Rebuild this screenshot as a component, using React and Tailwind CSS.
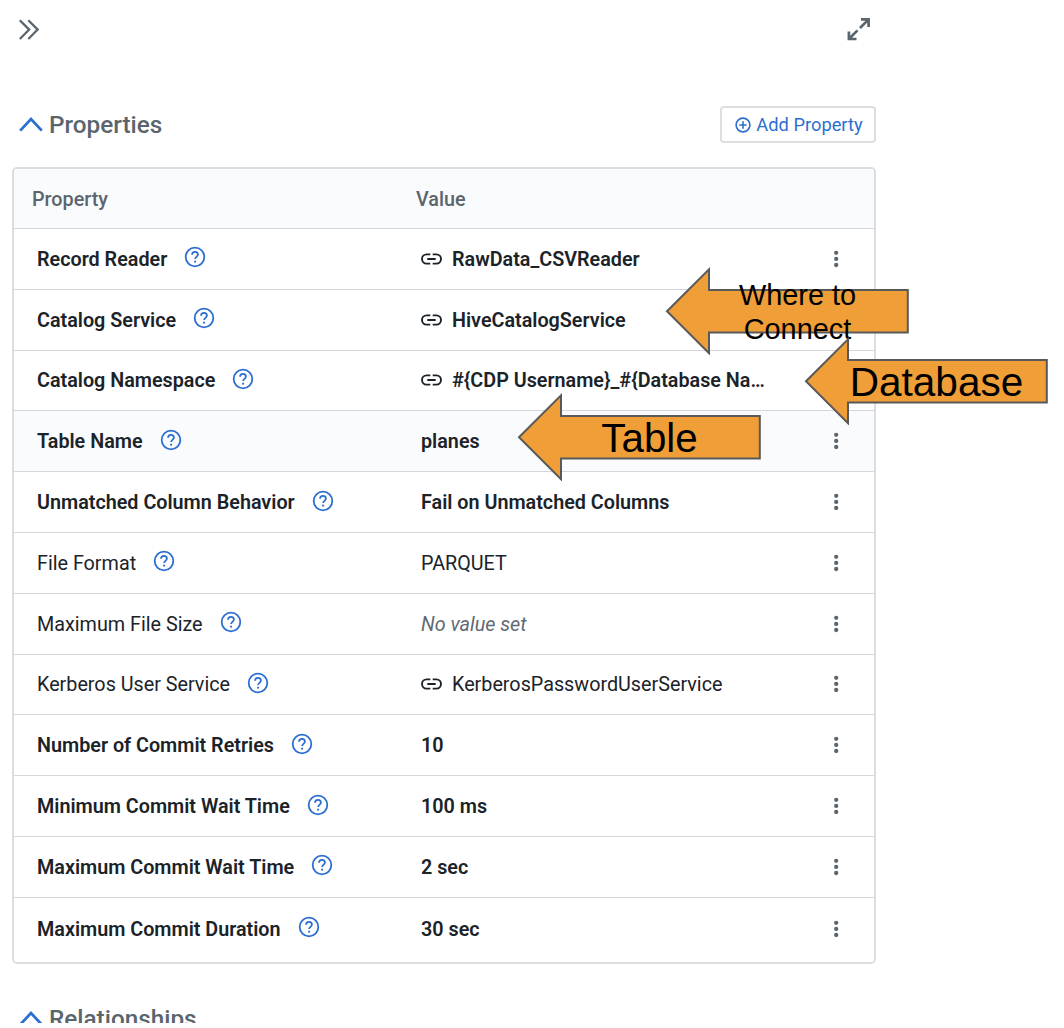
import React from "react";

const rows = [
  { name: "Record Reader", value: "RawData_CSVReader", link: true, bold: true, menu: true },
  { name: "Catalog Service", value: "HiveCatalogService", link: true, bold: true },
  { name: "Catalog Namespace", value: "#{CDP Username}_#{Database Na…", link: true, bold: true },
  { name: "Table Name", value: "planes", bold: true, menu: true, active: true },
  { name: "Unmatched Column Behavior", value: "Fail on Unmatched Columns", bold: true, menu: true },
  { name: "File Format", value: "PARQUET", menu: true },
  { name: "Maximum File Size", value: "No value set", empty: true, menu: true },
  { name: "Kerberos User Service", value: "KerberosPasswordUserService", link: true, menu: true },
  { name: "Number of Commit Retries", value: "10", bold: true, menu: true },
  { name: "Minimum Commit Wait Time", value: "100 ms", bold: true, menu: true },
  { name: "Maximum Commit Wait Time", value: "2 sec", bold: true, menu: true },
  { name: "Maximum Commit Duration", value: "30 sec", bold: true, menu: true },
];

function HelpIcon() {
  return (
    <svg className="mb-[3px] ml-[17px] h-[22px] w-[22px] shrink-0" viewBox="0 0 22 22" fill="none" stroke="#2c6fd1" strokeWidth="1.8">
      <circle cx="11" cy="11" r="9.3" />
      <path d="M8.1 8.7c0-1.7 1.2-2.8 2.9-2.8s2.9 1.1 2.9 2.7c0 2.2-2.8 2.3-2.8 4.5" />
      <path d="M11.1 14.7v1.9" strokeWidth="1.9" />
    </svg>
  );
}

function LinkIcon() {
  return (
    <svg className="mr-[10px] h-3 w-[21px] shrink-0" viewBox="0 0 21 12" fill="none" stroke="#1b2329" strokeWidth="1.9">
      <path d="M9.3 1.4H5.6a4.6 4.6 0 0 0 0 9.2h3.7M11.7 1.4h3.7a4.6 4.6 0 0 1 0 9.2h-3.7M6.3 6h8.4" />
    </svg>
  );
}

function MenuIcon() {
  return (
    <svg className="h-5 w-6 shrink-0" viewBox="0 0 24 20" fill="#5a656d">
      <circle cx="12.2" cy="3.8" r="2.15" />
      <circle cx="12.2" cy="9.9" r="2.15" />
      <circle cx="12.2" cy="16" r="2.15" />
    </svg>
  );
}

function CaretUp() {
  return (
    <svg className="h-4 w-6 shrink-0" viewBox="0 0 24 16" fill="none" stroke="#2c6fd1" strokeWidth="2.8">
      <path d="M1.2 13.6 12 2.1l10.8 11.5" />
    </svg>
  );
}

function Arrow({ className, children }) {
  return (
    <div className={`absolute h-[88px] w-[244px] ${className}`}>
      <svg className="absolute inset-0 h-full w-full" viewBox="0 0 244 88" fill="#f09e38" stroke="#595959" strokeWidth="2">
        <path d="M2 44.3 44 2.4V23H242.8v42.6H44v20.6z" />
      </svg>
      <div className="relative flex h-full items-center justify-center whitespace-nowrap text-center font-['Liberation_Sans',Arial,sans-serif] text-black">
        {children}
      </div>
    </div>
  );
}

function PropertyRow({ row }) {
  const weight = row.bold ? "font-semibold" : "font-normal";
  return (
    <div className={`flex h-[60.8px] shrink-0 items-center border-b border-[#d3d6da] last:h-[65px] last:border-b-0 last:pb-[3px] ${row.active ? "bg-[#fafbfd]" : "bg-white"}`}>
      <div className={`flex w-[407px] shrink-0 items-center pl-[23px] ${weight}`}>
        <span className="pt-[2px]">{row.name}</span>
        <HelpIcon />
      </div>
      <div className={`flex w-[345px] shrink-0 items-center ${weight} ${row.empty ? "italic text-[#5f6a72]" : ""}`}>
        {row.link && <LinkIcon />}
        <span className="whitespace-nowrap pt-[2px]">{row.value}</span>
      </div>
      <div className="ml-[58px] flex w-6">{row.menu && <MenuIcon />}</div>
    </div>
  );
}

export default function App() {
  return (
    <div className="relative h-[1028px] w-[1064px] overflow-hidden bg-white font-['Roboto',sans-serif] text-[19.75px] leading-6 text-[#1b2329]">
      <div className="h-[1023px] overflow-hidden">
        <header className="flex h-[106px] w-[876px] items-start justify-between pl-[18px] pr-[5px] pt-[17px]">
          <svg className="mt-[1px] h-[23px] w-[22px]" viewBox="0 0 22 23" fill="none" stroke="#5a656d" strokeWidth="2.3">
            <path d="M1.8 2.2 11.2 11.6l-9.4 9.4M10.3 2.2l9.4 9.4-9.4 9.4" />
          </svg>
          <svg className="h-6 w-6" viewBox="0 0 24 24" fill="none" stroke="#5a656d" strokeWidth="2.7">
            <path d="M14 2.4h7.6V10M21.6 2.4l-8.6 8.6M1.9 14.4V22h7.6M1.9 22l8.6-8.6" />
          </svg>
        </header>
        <div className="flex h-[37px] w-[876px] items-center justify-between pl-[19px]">
          <h2 className="flex items-center gap-[6px] text-[24.3px] font-medium leading-8 text-[#5a656d]">
            <CaretUp />
            <span>Properties</span>
          </h2>
          <button className="flex h-[37px] w-[156px] items-center justify-center gap-[5px] rounded-[4px] border-2 border-[#dcdee1] pl-[2px] text-[18.3px] text-[#2c6fd1]">
            <svg className="h-4 w-4" viewBox="0 0 16 16" fill="none" stroke="#2c6fd1" strokeWidth="1.6">
              <circle cx="8" cy="8" r="6.9" />
              <path d="M4.3 8h7.4M8 4.3v7.4" />
            </svg>
            <span>Add Property</span>
          </button>
        </div>
        <section className="ml-3 mt-6 flex h-[797px] w-[864px] flex-col overflow-hidden rounded-[5px] border-2 border-[#dbdde0]">
          <div className="flex h-[60px] shrink-0 items-center border-b border-[#d3d6da] bg-[#fafbfd] pl-[18px] pt-[2px] font-medium text-[#5a656d]">
            <span className="w-[384px]">Property</span>
            <span>Value</span>
          </div>
          {rows.map((row) => (
            <PropertyRow key={row.name} row={row} />
          ))}
        </section>
        <h2 className="ml-[19px] mt-[39px] flex items-center gap-[6px] text-[24.3px] font-medium leading-8 text-[#5a656d]">
          <CaretUp />
          <span>Relationships</span>
        </h2>
      </div>
      <Arrow className="left-[665px] top-[267px]">
        <span className="ml-[21px] mt-[2px] text-[28.9px] leading-[34px]">Where to<br />Connect</span>
      </Arrow>
      <Arrow className="left-[804px] top-[337px]">
        <span className="ml-[21px] mt-[1px] text-[40.5px] leading-[46px]">Database</span>
      </Arrow>
      <Arrow className="left-[517px] top-[393px]">
        <span className="ml-[21px] mt-[4px] text-[40.3px] leading-[46px]">Table</span>
      </Arrow>
    </div>
  );
}
